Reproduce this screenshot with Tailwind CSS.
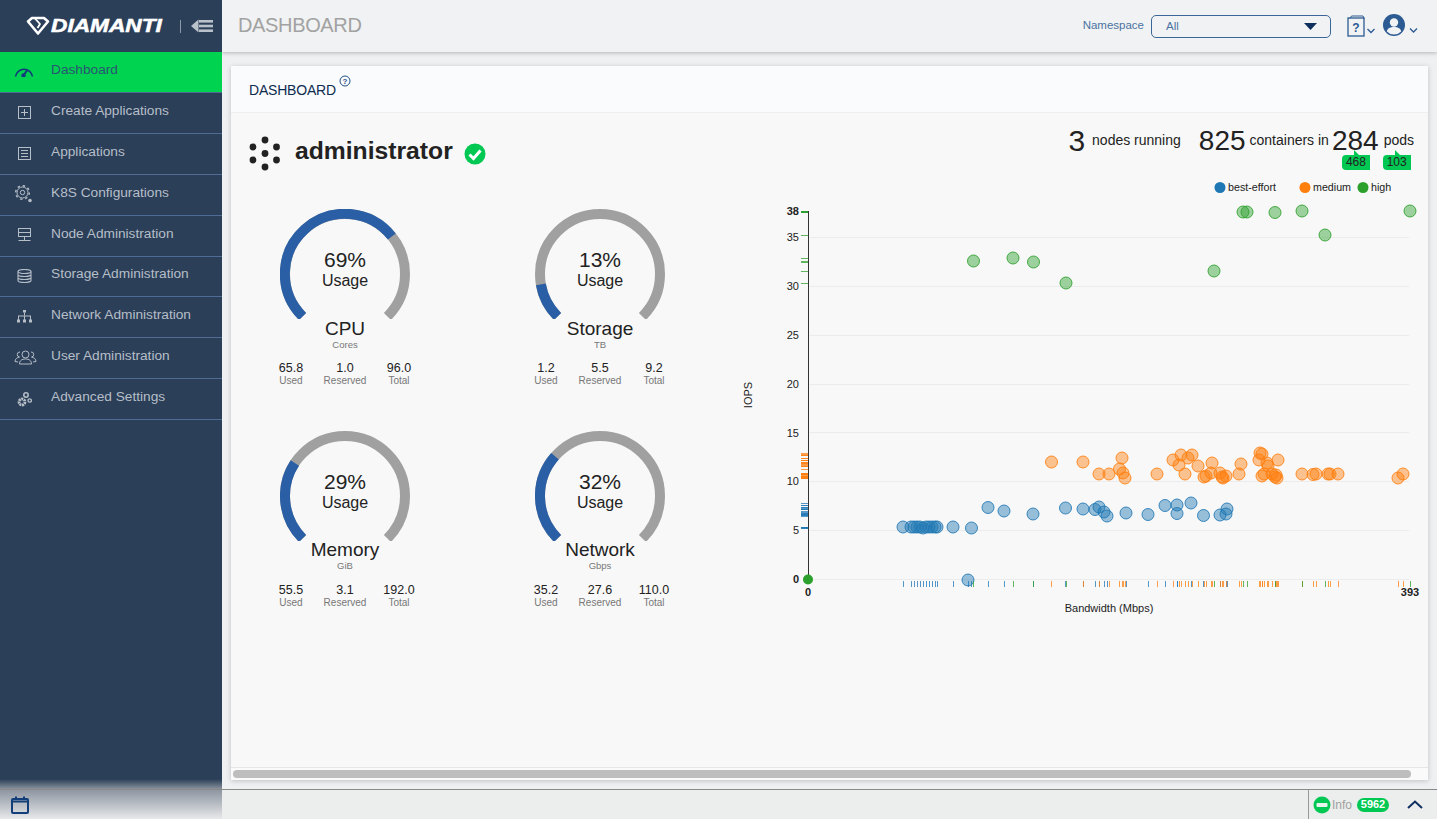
<!DOCTYPE html>
<html>
<head>
<meta charset="utf-8">
<script src="https://cdn.jsdelivr.net/npm/@tailwindcss/browser@4"></script>
</head>
<body class="m-0 overflow-hidden bg-[#eef0f1] font-['Liberation_Sans',Arial,sans-serif] text-[#222]">
<div class="flex h-[819px] w-[1437px] flex-col overflow-hidden">
  <div class="flex h-[789px] min-h-0">
    <!-- SIDEBAR -->
    <aside class="relative flex w-[222px] shrink-0 flex-col bg-[#2b3f58]">
      <div class="flex h-[52px] shrink-0 items-center pl-[26px]">
        <svg width="24" height="20" viewBox="0 0 24 20" fill="none" stroke="#fff" stroke-width="2.6" stroke-linejoin="round"><path d="M2 5.500 6 2h12l4 3.500L12 17.500Z"/><path d="M9 2.500 14 8l-2.500 4" stroke-width="1.800"/></svg>
        <span class="ml-[1px] inline-block w-[112px] origin-left scale-x-[1.26] whitespace-nowrap text-[18px] font-bold italic leading-none text-white [-webkit-text-stroke:0.5px_white]">DIAMANTI</span>
        <div class="ml-[17px] h-[13px] w-px bg-[#8d99a8]"></div>
        <svg class="ml-[10px]" width="23" height="14" viewBox="0 0 23 14" fill="#b9c1cb"><path d="M0 7 7.500 .5V13.500Z"/><rect x="8" y="1" width="14" height="2.600"/><rect x="8" y="5.700" width="14" height="2.600"/><rect x="8" y="10.400" width="14" height="2.600"/></svg>
      </div>
      <nav class="flex flex-col text-[13.7px] leading-none text-[#b6bec8]">
        <a class="flex h-[41px] items-center border-b border-[#4f6d94] bg-[#00d34f] pb-[5px] text-[#2b5573]">
          <span class="flex w-[51px] justify-center pt-[3px] pr-[3px]"><svg width="20" height="11" viewBox="0 0 20 11" fill="none" stroke="#123a7a" stroke-width="1.600"><path d="M1.500 10.500A8.600 8.600 0 0 1 18.500 10.500"/><path d="M9 10 13 4.500" stroke-width="2"/><circle cx="9.500" cy="9.500" r="1.400" fill="#123a7a"/></svg></span>Dashboard</a>
        <a class="flex h-[41px] items-center border-b border-[#4f6d94] pb-[5px]">
          <span class="flex w-[51px] justify-center pt-[3px] pr-[3px]"><svg width="13" height="13" viewBox="0 0 13 13" fill="none" stroke="#b6bec8" stroke-width="1"><rect x=".5" y=".5" width="12" height="12"/><path d="M6.500 3v7M3 6.500h7"/></svg></span>Create Applications</a>
        <a class="flex h-[41px] items-center border-b border-[#4f6d94] pb-[5px]">
          <span class="flex w-[51px] justify-center pt-[3px] pr-[3px]"><svg width="13" height="13" viewBox="0 0 13 13" fill="none" stroke="#b6bec8" stroke-width="1"><rect x=".5" y=".5" width="12" height="12"/><path d="M3 3.500h7M3 6.500h7M3 9.500h7"/></svg></span>Applications</a>
        <a class="flex h-[41px] items-center border-b border-[#4f6d94] pb-[5px]">
          <span class="flex w-[51px] justify-center pt-[3px] pr-[3px]"><svg width="18" height="18" viewBox="0 0 18 18" fill="none" stroke="#b6bec8"><circle cx="7.500" cy="7.500" r="5.500" stroke-width="1"/><circle cx="7.500" cy="7.500" r="6.800" stroke-width="1.500" stroke-dasharray="2.400 2.940"/><circle cx="7.500" cy="7.500" r="2.200" stroke-width="1"/><circle cx="15" cy="15.500" r="1.800" fill="#b6bec8" stroke="none"/></svg></span>K8S Configurations</a>
        <a class="flex h-[41px] items-center border-b border-[#4f6d94] pb-[5px]">
          <span class="flex w-[51px] justify-center pt-[3px] pr-[3px]"><svg width="13" height="14" viewBox="0 0 13 14" fill="none" stroke="#b6bec8" stroke-width="1"><rect x=".5" y=".5" width="12" height="4"/><rect x=".5" y="4.500" width="12" height="4"/><path d="M6.500 8.500v3.500M.5 12.500h12M6.500 11.500v1"/></svg></span>Node Administration</a>
        <a class="flex h-[40px] items-center border-b border-[#4f6d94] pb-[5px]">
          <span class="flex w-[51px] justify-center pt-[4px] pr-[3px]"><svg width="15" height="14" viewBox="0 0 15 14" fill="none" stroke="#b6bec8" stroke-width="1.100"><ellipse cx="7.500" cy="2.500" rx="6.500" ry="2"/><path d="M1 2.500v9c0 1 3 2 6.500 2s6.500-1 6.500-2v-9M1 5.500c0 1 3 2 6.500 2s6.500-1 6.500-2M1 8.500c0 1 3 2 6.500 2s6.500-1 6.500-2"/></svg></span>Storage Administration</a>
        <a class="flex h-[41px] items-center border-b border-[#4f6d94] pb-[5px]">
          <span class="flex w-[51px] justify-center pt-[4px] pr-[3px]"><svg width="15" height="13" viewBox="0 0 15 13" fill="#b6bec8"><rect x="6" y="0" width="3" height="2.500"/><rect x="7" y="2.500" width="1" height="3"/><rect x="1" y="5.500" width="13" height="1"/><rect x="0" y="9.500" width="3" height="3"/><rect x="6" y="9.500" width="3" height="3"/><rect x="12" y="9.500" width="3" height="3"/><rect x="1" y="6" width="1" height="4"/><rect x="7" y="6" width="1" height="4"/><rect x="13" y="6" width="1" height="4"/></svg></span>Network Administration</a>
        <a class="flex h-[41px] items-center border-b border-[#4f6d94] pb-[5px]">
          <span class="flex w-[51px] justify-center pt-[3px]"><svg width="23" height="15" viewBox="0 0 23 15" fill="none" stroke="#b6bec8" stroke-width="1"><circle cx="11.500" cy="4.500" r="3.500"/><path d="M5.500 14c0-3.500 2.500-5 6-5s6 1.500 6 5Z"/><path d="M6 2A2.500 2.500 0 0 0 5.500 7C3 7.500 1 9 1 11.500l3 .5M17 2a2.500 2.500 0 0 1 .5 5c2.500.5 4.500 2 4.500 4.500l-3 .5"/></svg></span>User Administration</a>
        <a class="flex h-[41px] items-center border-b border-[#4f6d94] pb-[5px]">
          <span class="flex w-[51px] justify-center pt-[5px] pr-[3px]"><svg width="15" height="15" viewBox="0 0 15 15" fill="none" stroke="#b6bec8"><circle cx="5" cy="10" r="3" stroke-width="2.800" stroke-dasharray="2 .6"/><circle cx="9" cy="3" r="2.200" stroke-width="1.500"/><circle cx="12.700" cy="8.500" r="1.700" stroke-width="1.300"/></svg></span>Advanced Settings</a>
      </nav>
      <div class="absolute bottom-0 left-0 h-[10px] w-full bg-gradient-to-b from-[#2b3f58] to-[#8a929c]"></div>
    </aside>
    <!-- MAIN -->
    <main class="flex min-w-0 flex-1 flex-col">
      <header class="flex h-[52px] shrink-0 items-center bg-[#f1f2f3] pl-[16px] pr-[18px] shadow-[0_1px_4px_rgba(0,0,0,0.25)]">
        <h1 class="pb-[2px] text-[20px] font-normal leading-none tracking-[-0.35px] text-[#a2a2a2]">DASHBOARD</h1>
        <div class="ml-auto flex items-center">
          <span class="text-[11.5px] text-[#4a72a2]">Namespace</span>
          <div class="ml-[7px] flex h-[23px] w-[180px] items-center justify-between rounded-[5px] border border-[#3b6699] pl-[14px] pr-[13px] text-[11.5px] text-[#4a72a2]">
            <span class="pt-[1px]">All</span>
            <svg width="13" height="7" viewBox="0 0 13 7" fill="#0f2f5f"><path d="M0 0h13L6.500 7Z"/></svg>
          </div>
          <svg class="ml-[16px]" width="30" height="22" viewBox="0 0 30 22" fill="none"><path d="M3 3.500 4.500 1h11.500l1 2.500" stroke="#2c5a92"/><rect x="1" y="3" width="16" height="18" stroke="#2c5a92" stroke-width="1.300"/><text x="9" y="17" text-anchor="middle" font-size="12" font-weight="700" fill="#2c5a92" font-family="Liberation Sans">?</text><path d="M20.500 14l3.500 3.500 3.500-3.500" stroke="#2c5a92" stroke-width="1.300"/></svg>
          <svg class="ml-[6px]" width="36" height="24" viewBox="0 0 36 24" fill="none"><circle cx="11" cy="11" r="11" fill="#2c5a92"/><circle cx="11" cy="8.500" r="4.200" fill="#f1f2f3"/><path d="M3.800 17.500C4.500 14 7.500 13 11 13s6.500 1 7.200 4.500A10 10 0 0 1 3.800 17.500Z" fill="#f1f2f3"/><path d="M27 14.500l3.500 3.500 3.500-3.500" stroke="#2c5a92" stroke-width="1.300"/></svg>
        </div>
      </header>
      <div class="flex min-h-0 flex-1 flex-col pb-[9px] pl-[9px] pr-[9px] pt-[14px]">
        <section class="flex min-h-0 flex-1 flex-col bg-[#f8f8f8] shadow-[0_1px_5px_rgba(0,0,0,0.2)]">
          <div class="flex h-[47px] shrink-0 border-b border-[#eeeff1] bg-[#fafbfc] pl-[18px]">
            <span class="pt-[16px] text-[14px] leading-[16px] tracking-[-0.2px] text-[#0e2c50]">DASHBOARD</span>
            <svg class="ml-[3px] mt-[9px]" width="12" height="12" viewBox="0 0 12 12" fill="none"><circle cx="6" cy="6" r="5" stroke="#1f4f86"/><text x="6" y="9" text-anchor="middle" font-size="8" font-weight="700" fill="#1f4f86" font-family="Liberation Sans">?</text></svg>
          </div>
          <div class="flex min-h-0 flex-1">
            <!-- left column -->
            <div class="w-[507px] shrink-0 pl-[18px]">
              <div class="mt-[22px] flex h-[35px] items-center pt-[1px]">
                <svg width="32" height="35" viewBox="0 0 32 35" fill="#222"><circle cx="16" cy="4" r="3.400"/><circle cx="4" cy="11" r="3.400"/><circle cx="27.500" cy="11" r="3.400"/><circle cx="16" cy="17.500" r="3.400"/><circle cx="4" cy="24" r="3.400"/><circle cx="27.500" cy="24" r="3.400"/><circle cx="16" cy="31" r="3.400"/></svg>
                <span class="ml-[14px] pb-[3px] text-[24.7px] font-bold leading-none text-[#222]">administrator</span>
                <svg class="ml-[11px] mt-[1px]" width="22" height="22" viewBox="0 0 22 22"><circle cx="11" cy="11" r="10.500" fill="#00c853"/><path d="M5.500 11.500 9.500 15.500 16.500 7.500" fill="none" stroke="#fff" stroke-width="3"/></svg>
              </div>
              <div class="ml-[15px] mt-[39px] grid grid-cols-[162px_162px] gap-x-[93px] gap-y-[45px]">
                <!-- CPU -->
                <div class="flex flex-col items-center">
                  <div class="relative h-[110px] w-[130px]">
                    <svg width="130" height="110" viewBox="0 0 130 110" fill="none" stroke-width="10"><path d="M22.570 107.430A60 60 0 1 1 107.430 107.430" stroke="#a0a0a0"/><path d="M22.570 107.430A60 60 0 1 1 111.800 27.500" stroke="#2a5fa5"/></svg>
                    <div class="absolute left-0 right-0 top-[40px] text-center"><div class="text-[21px] leading-[22px]">69%</div><div class="text-[16px] leading-[20px]">Usage</div></div>
                  </div>
                  <div class="text-[19px] leading-[19px]">CPU</div>
                  <div class="mt-[2px] text-[9.5px] leading-[10px] text-[#777]">Cores</div>
                  <div class="mt-[12px] grid w-full grid-cols-3 text-center"><div><div class="text-[12.5px] leading-[13px]">65.8</div><div class="text-[10px] leading-[11px] text-[#777]">Used</div></div><div><div class="text-[12.5px] leading-[13px]">1.0</div><div class="text-[10px] leading-[11px] text-[#777]">Reserved</div></div><div><div class="text-[12.5px] leading-[13px]">96.0</div><div class="text-[10px] leading-[11px] text-[#777]">Total</div></div></div>
                </div>
                <!-- Storage -->
                <div class="flex flex-col items-center">
                  <div class="relative h-[110px] w-[130px]">
                    <svg width="130" height="110" viewBox="0 0 130 110" fill="none" stroke-width="10"><path d="M22.570 107.430A60 60 0 1 1 107.430 107.430" stroke="#a0a0a0"/><path d="M22.570 107.430A60 60 0 0 1 5.900 75.300" stroke="#2a5fa5"/></svg>
                    <div class="absolute left-0 right-0 top-[40px] text-center"><div class="text-[21px] leading-[22px]">13%</div><div class="text-[16px] leading-[20px]">Usage</div></div>
                  </div>
                  <div class="text-[19px] leading-[19px]">Storage</div>
                  <div class="mt-[2px] text-[9.5px] leading-[10px] text-[#777]">TB</div>
                  <div class="mt-[12px] grid w-full grid-cols-3 text-center"><div><div class="text-[12.5px] leading-[13px]">1.2</div><div class="text-[10px] leading-[11px] text-[#777]">Used</div></div><div><div class="text-[12.5px] leading-[13px]">5.5</div><div class="text-[10px] leading-[11px] text-[#777]">Reserved</div></div><div><div class="text-[12.5px] leading-[13px]">9.2</div><div class="text-[10px] leading-[11px] text-[#777]">Total</div></div></div>
                </div>
                <!-- Memory -->
                <div class="flex flex-col items-center">
                  <div class="relative h-[110px] w-[130px]">
                    <svg width="130" height="110" viewBox="0 0 130 110" fill="none" stroke-width="10"><path d="M22.570 107.430A60 60 0 1 1 107.430 107.430" stroke="#a0a0a0"/><path d="M22.570 107.430A60 60 0 0 1 14.850 32.060" stroke="#2a5fa5"/></svg>
                    <div class="absolute left-0 right-0 top-[40px] text-center"><div class="text-[21px] leading-[22px]">29%</div><div class="text-[16px] leading-[20px]">Usage</div></div>
                  </div>
                  <div class="-mt-px text-[19px] leading-[19px]">Memory</div>
                  <div class="mt-[2px] text-[9.5px] leading-[10px] text-[#777]">GiB</div>
                  <div class="mt-[13px] grid w-full grid-cols-3 text-center"><div><div class="text-[12.5px] leading-[13px]">55.5</div><div class="text-[10px] leading-[11px] text-[#777]">Used</div></div><div><div class="text-[12.5px] leading-[13px]">3.1</div><div class="text-[10px] leading-[11px] text-[#777]">Reserved</div></div><div><div class="text-[12.5px] leading-[13px]">192.0</div><div class="text-[10px] leading-[11px] text-[#777]">Total</div></div></div>
                </div>
                <!-- Network -->
                <div class="flex flex-col items-center">
                  <div class="relative h-[110px] w-[130px]">
                    <svg width="130" height="110" viewBox="0 0 130 110" fill="none" stroke-width="10"><path d="M22.570 107.430A60 60 0 1 1 107.430 107.430" stroke="#a0a0a0"/><path d="M22.570 107.430A60 60 0 0 1 20 25.300" stroke="#2a5fa5"/></svg>
                    <div class="absolute left-0 right-0 top-[40px] text-center"><div class="text-[21px] leading-[22px]">32%</div><div class="text-[16px] leading-[20px]">Usage</div></div>
                  </div>
                  <div class="-mt-px text-[19px] leading-[19px]">Network</div>
                  <div class="mt-[2px] text-[9.5px] leading-[10px] text-[#777]">Gbps</div>
                  <div class="mt-[13px] grid w-full grid-cols-3 text-center"><div><div class="text-[12.5px] leading-[13px]">35.2</div><div class="text-[10px] leading-[11px] text-[#777]">Used</div></div><div><div class="text-[12.5px] leading-[13px]">27.6</div><div class="text-[10px] leading-[11px] text-[#777]">Reserved</div></div><div><div class="text-[12.5px] leading-[13px]">110.0</div><div class="text-[10px] leading-[11px] text-[#777]">Total</div></div></div>
                </div>
              </div>
            </div>
            <!-- right column -->
            <div class="flex min-w-0 flex-1 flex-col">
              <div class="flex h-[62px] items-start justify-end pr-[14px] pt-[13px] text-[14px] leading-[30px]">
                <span class="text-[30px] leading-[30px]">3</span><span class="ml-[7px] leading-[28px]">nodes running</span>
                <span class="ml-[18px] text-[28px] leading-[30px]">825</span><span class="ml-[4px] leading-[28px]">containers in</span>
                <span class="relative ml-[3px] text-[28px] leading-[30px]">284<span class="absolute left-[22px] top-[24px] block h-0 w-0 border-b-[5px] border-r-[5px] border-b-[#00c853] border-r-transparent"></span><span class="absolute left-[10px] top-[29px] block h-[15px] w-[28px] rounded-l-[4px] bg-[#00c853] text-center text-[12px] leading-[15px]">468</span></span>
                <span class="relative ml-[5px] leading-[28px]">pods<span class="absolute left-[-1px] top-[29px] block h-[15px] w-[28px] rounded-l-[4px] bg-[#00c853] text-center text-[12px] leading-[15px]">103</span><span class="absolute left-[11px] top-[24px] block h-0 w-0 border-b-[5px] border-r-[5px] border-b-[#00c853] border-r-transparent"></span></span>
              </div>
              <svg id="chart" width="690" height="445" viewBox="738 175 690 445" class="block" font-family="Liberation Sans" fill="#222"></svg>
            </div>
          </div>
          <div class="flex h-[13px] shrink-0 items-center border-t border-[#e6e6e6] bg-[#fafafa] pl-[2px]">
            <div class="h-[8px] w-[1178px] rounded-full bg-[#bdbdbd]"></div>
          </div>
        </section>
      </div>
    </main>
  </div>
  <!-- FOOTER -->
  <footer class="flex h-[30px] shrink-0 border-t border-[#8a8a8a] bg-[#eceded]">
    <div class="flex w-[222px] items-center bg-gradient-to-b from-[#8e96a2] to-[#e8e9ea] pl-[11px]">
      <svg width="18" height="18" viewBox="0 0 18 18" fill="none" stroke="#123f7a" stroke-width="2"><rect x="1" y="3" width="16" height="14" rx="1"/><path d="M1 5.500h16M5 .5v3M13 .5v3"/></svg>
    </div>
    <div class="ml-auto flex w-[129px] items-center border-l border-[#999] pl-[4px]">
      <svg width="18" height="18" viewBox="0 0 18 18"><circle cx="9" cy="9" r="8.500" fill="#00c853"/><rect x="3.500" y="7" width="11" height="4" rx="1" fill="#e8f5ec"/></svg>
      <span class="ml-[1px] text-[12px] text-[#a0a0a0]">Info</span>
      <span class="ml-[5px] flex h-[14px] w-[32px] items-center justify-center rounded-full bg-[#00c853] text-[11px] font-bold text-white">5962</span>
      <svg class="ml-[18px]" width="16" height="9" viewBox="0 0 16 9" fill="none" stroke="#0f2f5f" stroke-width="2"><path d="M1 8 8 1.500 15 8"/></svg>
    </div>
  </footer>
</div>
<script>
var blue=[[903,527],[911,527],[914,527],[917,527],[920,527],[923,528],[926,527],[929,527],[932,527],[935,527],[937,527],[953,527],[971.5,528],[988,507.5],[1004,511],[1033,514],[1065.5,508],[1083,509],[1095,509.5],[1099,507],[1104,512],[1107,516],[968,580],[1126,513],[1148,514.5],[1165,505.5],[1177,505],[1177,513.5],[1191,503],[1203.5,515.5],[1220,515],[1227,509],[1226,514]];
var orange=[[1051.5,462],[1083,462],[1099,474],[1109,474],[1122,458],[1119.5,469],[1123,473],[1125,478],[1157,474],[1173,460],[1179,465],[1181,455],[1188,458],[1192,455],[1185,474],[1198,466],[1204,477],[1206,476],[1211,473],[1212,463],[1220,473],[1222,477],[1223,478],[1226,476],[1239,474],[1241,464],[1260,453],[1262,454],[1259,460],[1267,463],[1268,466],[1278,460],[1262,476],[1264,474],[1272,474],[1275,477],[1277,478],[1276,475],[1302,474],[1313,474.5],[1316,474],[1328,474],[1330,474],[1338,474],[1398,478],[1403,474]];
var green=[[973.5,261],[1013,258],[1033.5,262],[1066,283],[1214,271],[1243,212],[1247,212],[1275,212.5],[1302,211],[1325,235],[1410,211]];
var h='';
[[237,'35'],[286,'30'],[335,'25'],[384,'20'],[432.5,'15'],[481,'10'],[530,'5'],[579,'0']].forEach(function(t){
  h+='<line x1="808" x2="1409" y1="'+t[0]+'" y2="'+t[0]+'" stroke="#ececec" shape-rendering="crispEdges"/>';
  h+='<text x="799" y="'+(t[0]+4)+'" text-anchor="end" font-size="11"'+(t[1]=='0'?' font-weight="700"':'')+'>'+t[1]+'</text>';
});
h+='<text x="799" y="215" text-anchor="end" font-size="11" font-weight="700">38</text>';
h+='<line x1="808" x2="808" y1="211" y2="579" stroke="#333" stroke-width="1" shape-rendering="crispEdges"/>';
function series(d,c){
  d.forEach(function(p){
    h+='<line x1="'+p[0]+'" x2="'+p[0]+'" y1="581" y2="587" stroke="'+c+'" stroke-opacity=".75" shape-rendering="crispEdges"/>';
    if(p[1]<570) h+='<line x1="801" x2="808" y1="'+p[1]+'" y2="'+p[1]+'" stroke="'+c+'" stroke-opacity=".75" shape-rendering="crispEdges"/>';
  });
  d.forEach(function(p){
    h+='<circle cx="'+p[0]+'" cy="'+p[1]+'" r="6" fill="'+c+'" fill-opacity=".45" stroke="'+c+'" stroke-opacity=".85" stroke-width="1"/>';
  });
}
series(blue,'#1f77b4');series(orange,'#ff7f0e');series(green,'#2ca02c');
h+='<circle cx="808" cy="579.5" r="5" fill="#2ca02c"/>';
h+='<line x1="801" x2="808" y1="212" y2="212" stroke="#2ca02c" stroke-width="2"/>';
h+='<text x="808" y="596" text-anchor="middle" font-size="11" font-weight="700">0</text>';
h+='<text x="1410" y="596" text-anchor="middle" font-size="11" font-weight="700">393</text>';
h+='<text x="1109" y="612" text-anchor="middle" font-size="11">Bandwidth (Mbps)</text>';
h+='<text transform="translate(752,395) rotate(-90)" text-anchor="middle" font-size="11">IOPS</text>';
[[1220,'#1f77b4','best-effort',1228],[1305,'#ff7f0e','medium',1313],[1363,'#2ca02c','high',1371]].forEach(function(l){
  h+='<circle cx="'+l[0]+'" cy="187.5" r="5.5" fill="'+l[1]+'"/><text x="'+l[3]+'" y="191" font-size="10.7">'+l[2]+'</text>';
});
document.getElementById('chart').innerHTML=h;
</script>
</body>
</html>
